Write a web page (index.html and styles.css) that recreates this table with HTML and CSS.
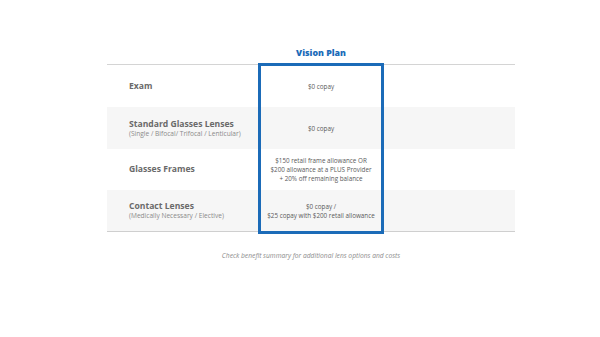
FILE: index.html
```html
<!DOCTYPE html>
<html lang="en">
<head>
<meta charset="utf-8">
<title>Vision Plan</title>
<link rel="stylesheet" href="styles.css">
</head>
<body>
<div class="wrap">
  <div class="head">
    <div class="head-label"></div>
    <div class="head-plan">Vision Plan</div>
    <div class="head-rest"></div>
  </div>
  <div class="table">
    <div class="row">
      <div class="label"><div class="name">Exam</div></div>
      <div class="value">$0 copay</div>
      <div class="rest"></div>
    </div>
    <div class="row alt">
      <div class="label"><div class="name">Standard Glasses Lenses</div><div class="sub">(Single / Bifocal/ Trifocal / Lenticular)</div></div>
      <div class="value">$0 copay</div>
      <div class="rest"></div>
    </div>
    <div class="row short">
      <div class="label"><div class="name">Glasses Frames</div></div>
      <div class="value">$150 retail frame allowance OR<br>$200 allowance at a PLUS Provider<br>+ 20% off remaining balance</div>
      <div class="rest"></div>
    </div>
    <div class="row alt short">
      <div class="label"><div class="name">Contact Lenses</div><div class="sub">(Medically Necessary / Elective)</div></div>
      <div class="value">$0 copay /<br>$25 copay with $200 retail allowance</div>
      <div class="rest"></div>
    </div>
  </div>
  <p class="note">Check benefit summary for additional lens options and costs</p>
</div>
</body>
</html>
```

FILE: styles.css
```css
html, body {
  margin: 0;
  padding: 0;
  background: #ffffff;
}

body {
  font-family: "Open Sans", "Liberation Sans", sans-serif;
  color: #666666;
}

.wrap {
  width: 408px;
  margin-left: 107px;
  padding-top: 47px;
}

.head {
  display: flex;
  height: 17px;
}

.head-label { width: 151px; }
.head-rest { flex: 1; }

.head-plan {
  width: 126px;
  text-align: center;
  font-weight: 800;
  font-size: 8.8px;
  line-height: 12px;
  color: #1b6bb8;
}

.table {
  position: relative;
  border-top: 1px solid #d4d4d4;
  border-bottom: 1px solid #cfcfcf;
}

.table::after {
  content: "";
  position: absolute;
  left: 151px;
  width: 120px;
  top: -2px;
  bottom: -3px;
  border: 3px solid #1b6bb8;
}

.row {
  display: flex;
  height: 42px;
  background: #ffffff;
}

.row.short { height: 41px; }

.row.alt { background: #f6f6f6; }

.label {
  width: 151px;
  box-sizing: border-box;
  padding-left: 22px;
  display: flex;
  flex-direction: column;
  justify-content: center;
}

.name {
  font-weight: 700;
  font-size: 8.6px;
  line-height: 11px;
  color: #6a6a6a;
}

.sub {
  font-size: 6.6px;
  line-height: 8px;
  color: #8a8a8a;
}

.value {
  width: 126px;
  display: flex;
  align-items: center;
  justify-content: center;
  text-align: center;
  font-size: 6.3px;
  line-height: 9px;
  color: #5a5a5a;
}

.rest { flex: 1; }

.note {
  margin: 19px 0 0;
  text-align: center;
  font-style: italic;
  font-size: 6.7px;
  line-height: 9px;
  color: #8c8c8c;
}
```
